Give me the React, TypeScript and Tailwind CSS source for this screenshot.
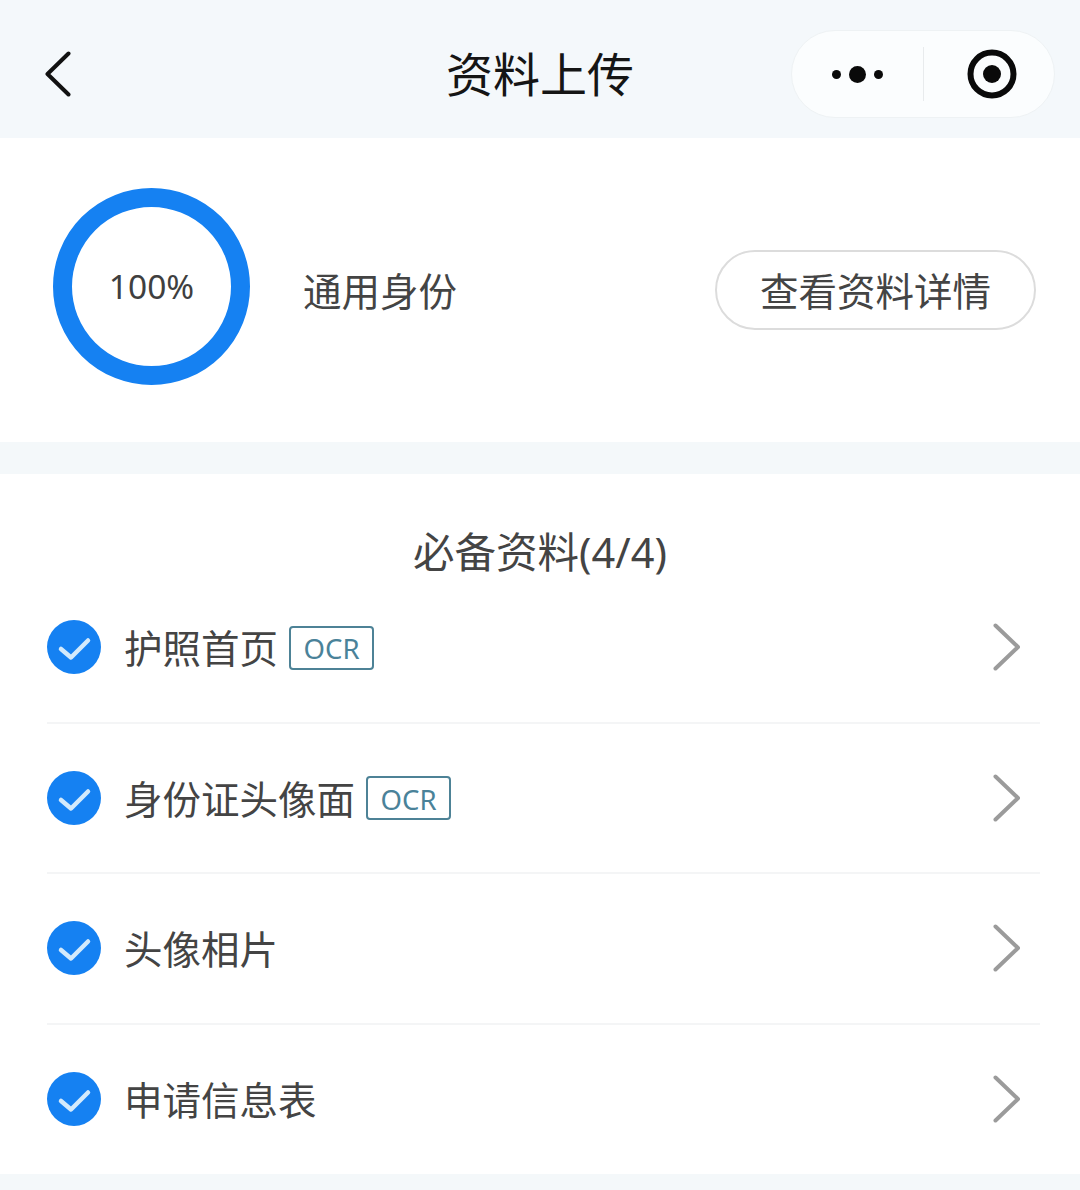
const rows = [
  { name: "护照首页", ocr: true },
  { name: "身份证头像面", ocr: true },
  { name: "头像相片", ocr: false },
  { name: "申请信息表", ocr: false },
];

function CheckIcon() {
  return (
    <svg width="54" height="54" viewBox="0 0 54 54" className="shrink-0">
      <circle cx="27" cy="27" r="27" fill="#1581f2" />
      <path d="M14 29 L24 37.5 L41 20.5" fill="none" stroke="#d3eafc" strokeWidth="4.5" strokeLinecap="round" strokeLinejoin="round" />
    </svg>
  );
}

function Chevron() {
  return (
    <svg width="28" height="48" viewBox="0 0 28 48" className="shrink-0">
      <path d="M2.5 2.5 L25 24 L2.5 45.5" fill="none" stroke="#9b9b9b" strokeWidth="4" strokeLinecap="round" strokeLinejoin="round" />
    </svg>
  );
}

export default function App() {
  return (
    <div className="w-[1080px] h-[1190px] overflow-hidden bg-white font-['Noto_Sans','Noto_Sans_CJK_SC',sans-serif]">
      {/* nav bar */}
      <div className="relative h-[138px] bg-[#f4f8fb] flex items-center justify-between pl-[45px] pr-[25px] pt-[10px]">
        <svg width="26" height="46" viewBox="0 0 26 46">
          <path d="M23.5 2.5 L2.5 23 L23.5 43.5" fill="none" stroke="#111" strokeWidth="4" strokeLinecap="round" strokeLinejoin="round" />
        </svg>
        <div className="absolute inset-x-0 top-[46px] text-center text-[47px] leading-[56px] text-[#151515]">资料上传</div>
        <div className="w-[264px] h-[88px] rounded-full bg-[#fbfdfe] border border-[#eef2f4] flex items-center">
          <div className="w-[131px] flex items-center justify-center gap-[8px]">
            <span className="w-[9px] h-[9px] rounded-full bg-[#0a0a0a]" />
            <span className="w-[17px] h-[17px] rounded-full bg-[#0a0a0a]" />
            <span className="w-[9px] h-[9px] rounded-full bg-[#0a0a0a]" />
          </div>
          <div className="w-px h-[54px] bg-[#e8ebed]" />
          <div className="flex-1 flex items-center justify-center pl-[6px]">
            <svg width="50" height="50" viewBox="0 0 50 50">
              <circle cx="25" cy="25" r="21.5" fill="none" stroke="#0a0a0a" strokeWidth="6" />
              <circle cx="25" cy="25" r="9" fill="#0a0a0a" />
            </svg>
          </div>
        </div>
      </div>

      {/* progress */}
      <div className="h-[304px] flex items-center pl-[53px] pr-[44px] pb-[8px]">
        <div className="w-[197px] h-[197px] rounded-full border-[19px] border-[#1581f2] flex items-center justify-center shrink-0">
          <span className="mt-[2px] text-[33.5px] leading-none text-[#3f3f3f]">100%</span>
        </div>
        <div className="ml-[53px] text-[38.5px] leading-[48px] text-[#444] mt-[10px]">通用身份</div>
        <div className="ml-auto w-[321px] h-[80px] pt-[3px] rounded-full border-2 border-[#dcdcdc] flex items-center justify-center text-[38.5px] text-[#444] mt-[8px]">
          查看资料详情
        </div>
      </div>

      <div className="h-[32px] bg-[#f4f8fa]" />

      {/* required documents */}
      <div className="h-[700px] flex flex-col">
        <div className="h-[99px] pt-[50px] text-center text-[41.5px] leading-[56px] text-[#444]">必备资料(4/4)</div>
        <div className="pr-[40px] pl-[47px]">
          {rows.map((row, i) => (
            <div key={row.name} className={"h-[150.5px] flex items-center border-b-2 " + (i < 3 ? "border-[#f4f5f6]" : "border-transparent")}>
              <CheckIcon />
              <span className="ml-[23px] mt-[2px] text-[38.5px] leading-[48px] text-[#444]">{row.name}</span>
              {row.ocr && (
                <span className="ml-[11px] mt-[1px] w-[85px] h-[44px] pt-[2px] rounded-[4px] border-2 border-[#4d8296] flex items-center justify-center text-[27.5px] leading-none text-[#4a8299]">
                  OCR
                </span>
              )}
              <div className="ml-auto mr-[19px]">
                <Chevron />
              </div>
            </div>
          ))}
        </div>
      </div>
      <div className="h-[16px] bg-[#f4f8fa]" />
    </div>
  );
}
